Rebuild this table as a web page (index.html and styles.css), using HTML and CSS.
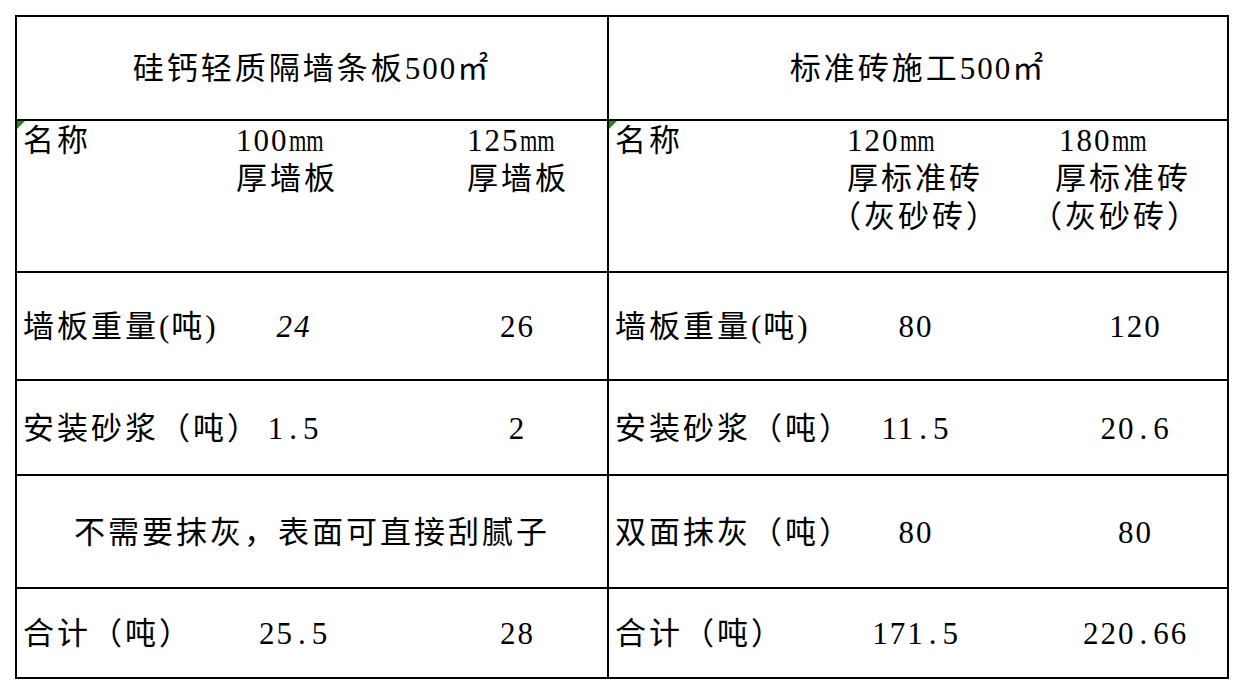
FILE: index.html
```html
<!DOCTYPE html>
<html lang="zh-CN">
<head>
<meta charset="utf-8">
<title>硅钙轻质隔墙条板与标准砖对比</title>
<link rel="stylesheet" href="styles.css">
</head>
<body>
<div class="sheet">
  <div class="cell title span3 mid">硅钙轻质隔墙条板<span class="num">500</span>㎡</div>
  <div class="cell title span3">标准砖施工<span class="num">500</span>㎡</div>

  <div class="cell head lbl mark">名称</div>
  <div class="cell head hb"><span class="num">100<span class="mm">mm</span></span><br>厚墙板</div>
  <div class="cell head hc mid"><span class="num">125<span class="mm">mm</span></span><br>厚墙板</div>
  <div class="cell head lbl mark">名称</div>
  <div class="cell head he"><span class="num">120<span class="mm">mm</span></span><br>厚标准砖<br><span class="l3">（灰砂砖）</span></div>
  <div class="cell head hf"><span class="num l1">180<span class="mm">mm</span></span><br>厚标准砖<br><span class="l3">（灰砂砖）</span></div>

  <div class="cell lbl">墙板重量<span class="num">(</span>吨<span class="num">)</span></div>
  <div class="cell val vb"><span class="num it">24</span></div>
  <div class="cell val vc mid"><span class="num">26</span></div>
  <div class="cell lbl">墙板重量<span class="num">(</span>吨<span class="num">)</span></div>
  <div class="cell val ve"><span class="num">80</span></div>
  <div class="cell val vf"><span class="num">120</span></div>

  <div class="cell lbl">安装砂浆（吨）</div>
  <div class="cell val vb"><span class="num">1<span class="dot">.</span>5</span></div>
  <div class="cell val vc mid"><span class="num">2</span></div>
  <div class="cell lbl">安装砂浆（吨）</div>
  <div class="cell val ve"><span class="num">11<span class="dot">.</span>5</span></div>
  <div class="cell val vf"><span class="num">20<span class="dot">.</span>6</span></div>

  <div class="cell val span3 mid">不需要抹灰，表面可直接刮腻子</div>
  <div class="cell lbl">双面抹灰（吨）</div>
  <div class="cell val ve"><span class="num">80</span></div>
  <div class="cell val vf"><span class="num">80</span></div>

  <div class="cell lbl last">合计（吨）</div>
  <div class="cell val vb last"><span class="num">25<span class="dot">.</span>5</span></div>
  <div class="cell val vc mid last"><span class="num">28</span></div>
  <div class="cell lbl last">合计（吨）</div>
  <div class="cell val ve last"><span class="num">171<span class="dot">.</span>5</span></div>
  <div class="cell val vf last"><span class="num">220<span class="dot">.</span>66</span></div>
</div>
</body>
</html>
```

FILE: styles.css
```css
html, body {
  margin: 0;
  padding: 0;
  background: #ffffff;
}

body {
  font-family: "Liberation Serif", "Noto Sans CJK SC", serif;
  color: #000000;
  font-size: 31px;
  letter-spacing: 3px;
}

.sheet {
  margin: 15px 0 0 15px;
  width: 1210px;
  border: 2px solid #000000;
  display: grid;
  grid-template-columns: 139px 268px 185px 187px 232px 199px;
  grid-template-rows: 104px 152px 108px 95px 113px 88px;
}

.cell {
  box-sizing: border-box;
  border-bottom: 2px solid #000000;
  display: flex;
  align-items: center;
  white-space: nowrap;
  min-width: 0;
  position: relative;
  line-height: 38px;
}

.cell.last {
  border-bottom: none;
}

.mid {
  border-right: 2px solid #000000;
}

.span3 {
  grid-column: span 3;
}

.title {
  justify-content: center;
  padding-top: 2px;
}

.head {
  padding-top: 1px;
  display: block;
}

.lbl {
  padding-left: 6px;
  padding-top: 2px;
}

.head.lbl {
  padding-top: 1px;
}

.hb { padding-left: 80px; }
.hc { padding-left: 43px; }
.he { padding-left: 51px; }
.he .l3 { margin-left: -17px; }
.hf { padding-left: 27px; }
.hf .l1 { padding-left: 4px; }
.hf .l3 { margin-left: -24px; }

.val {
  justify-content: center;
  padding-top: 2px;
}

.vb { padding-left: 8px; }
.vc { padding-left: 4px; }
.ve { padding-left: 8px; }
.vf { padding-left: 16px; }

.num {
  font-family: "Liberation Serif", serif;
  font-size: 31px;
  letter-spacing: 2px;
}

.dot {
  padding: 0 4px;
}

.it {
  font-style: italic;
}

.mm {
  display: inline-block;
  width: 35px;
  transform: scaleX(0.72);
  transform-origin: left center;
  letter-spacing: 0;
}

.mark::before {
  content: "";
  position: absolute;
  left: 0;
  top: 0;
  border-top: 8px solid #1a8a1a;
  border-right: 8px solid transparent;
}
```
